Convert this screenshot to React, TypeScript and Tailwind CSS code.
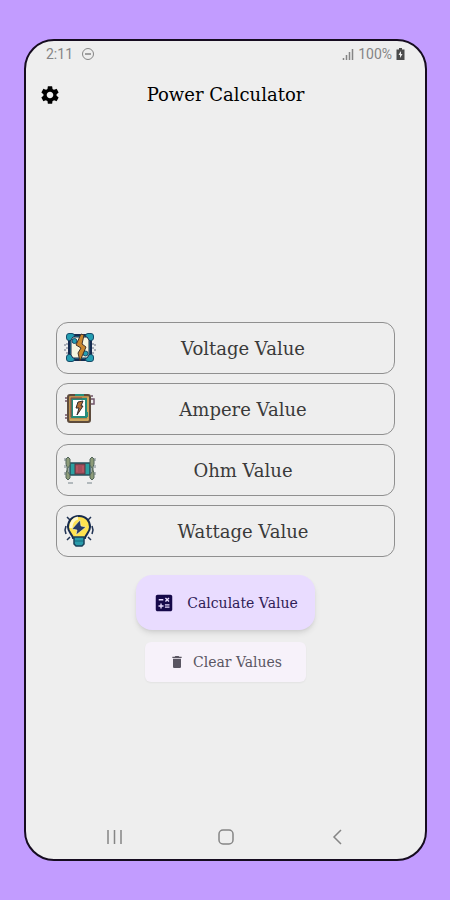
import React, { useState } from 'react';
import { MdCalculate, MdDelete, MdSettings } from 'react-icons/md';

const VoltageIcon = () => (
  <svg viewBox="0 0 32 32" className="size-8" role="img" aria-label="Voltage">
    <path d="M1 12v2M1 17v2M3 11v2M3 15v2M3 20v2M31 12v2M31 17v2M29 11v2M29 15v2M29 20v2" stroke="#687083" />
    <rect x="5" y="3" width="22" height="25" rx="2" fill="#248b9e" stroke="#152b50" strokeWidth="2" />
    <g fill="#249eb2" stroke="#174b69">
      <rect x="2.500" y="1.500" width="8" height="7" rx="2.500" />
      <rect x="21.500" y="1.500" width="8" height="7" rx="2.500" />
      <rect x="2.500" y="22.500" width="8" height="7" rx="2.500" />
      <rect x="21.500" y="22.500" width="8" height="7" rx="2.500" />
    </g>
    <path d="M9 5h14l2 3v15l-2 3H9l-2-3V8Z" fill="#f5f5df" stroke="#18274a" />
    <circle cx="10.500" cy="9" r="2.500" fill="#249eb2" stroke="#174b69" />
    <circle cx="21.500" cy="21.500" r="2.500" fill="#249eb2" stroke="#174b69" />
    <path d="m17 2-5 11 5 3-3 5 2 8 6-14-4-3 2-9Z" fill="#c9862c" stroke="#42342d" />
  </svg>
);

const AmpereIcon = () => (
  <svg viewBox="0 0 32 32" className="size-8" role="img" aria-label="Ampere">
    <path d="M1 5h3M1 8h3M1 22h3M1 25h3M27 3h2M27 6h3v5h-3" fill="none" stroke="#71566a" strokeWidth="1.500" />
    <rect x="4" y="2" width="22" height="27" rx="2" fill="#b98f4e" stroke="#5d4b3c" strokeWidth="2" />
    <path d="M6 27h18V4" fill="none" stroke="#e0bd72" />
    <rect x="8" y="6" width="14" height="18" fill="#fff" stroke="#268c7b" strokeWidth="2" />
    <path d="M7 24V5h11" fill="none" stroke="#8d443e" />
    <path d="M11 2h9M23 19v5" stroke="#29917d" strokeWidth="2" />
    <path d="m14 9-2 6h3l-2 7 6-9h-2l2-5Z" fill="#b56e35" stroke="#332b2b" />
  </svg>
);

const OhmIcon = () => (
  <svg viewBox="0 0 32 32" className="size-8" role="img" aria-label="Ohm">
    <path d="M1 4v3M1 11v3M1 18v3M31 4v3M31 11v3M31 18v3M4 29h5M23 29h5" stroke="#77838a" />
    <path d="M6 9h20v12H6Z" fill="#2ca0a1" stroke="#24505c" strokeWidth="1.500" />
    <rect x="11" y="10" width="10" height="10" fill="#a54d5b" stroke="#4f3942" />
    <path d="M13 12v6M19 12v6" stroke="#c5606a" />
    <g fill="#8d9b78" stroke="#53665b">
      <path d="m4 3 2 2v6l-2 3v4l2 3v3l-2 2-2-2v-5l1-3v-3l-1-3V5Z" />
      <path d="m28 3-2 2v6l2 3v4l-2 3v3l2 2 2-2v-5l-1-3v-3l1-3V5Z" />
    </g>
  </svg>
);

const WattageIcon = () => (
  <svg viewBox="0 0 32 32" className="size-8" role="img" aria-label="Wattage">
    <path d="m3 2 3 3M27 2l-3 3M2 11l-1 4 1 4M28 11l1 4-1 4M3 25l3-3M27 25l-3-3" fill="none" stroke="#223454" strokeWidth="1.500" />
    <path d="M15 1C8 1 4 6 4 12c0 5 4 7 5 11h12c1-4 5-6 5-11 0-6-4-11-11-11Z" fill="#ffe350" stroke="#172b4d" strokeWidth="2" />
    <path d="M7 13c0-5 2-9 7-10" fill="none" stroke="#fff9cf" strokeWidth="3" />
    <path d="m16 5-8 9 5 1-1 5 10-8-5-1Z" fill="#263b68" stroke="#fff6b8" strokeWidth=".6" />
    <path d="M10 22h10v7l-2 2h-6l-2-2Z" fill="#299baa" stroke="#194059" strokeWidth="1.500" />
    <path d="M11 26h8" stroke="#176c80" />
  </svg>
);

const fields = [
  { id: 'voltage', placeholder: 'Voltage Value', icon: VoltageIcon },
  { id: 'ampere', placeholder: 'Ampere Value', icon: AmpereIcon },
  { id: 'ohm', placeholder: 'Ohm Value', icon: OhmIcon },
  { id: 'wattage', placeholder: 'Wattage Value', icon: WattageIcon },
];

const StatusBar = () => (
  <div className="flex h-[26px] items-center justify-between px-5 font-['Roboto'] text-sm text-[#858585]">
    <div className="flex items-center gap-2">
      <span>2:11</span>
      <svg viewBox="0 0 14 14" className="size-3.5" fill="none" stroke="currentColor" aria-hidden="true">
        <circle cx="7" cy="7" r="5.500" />
        <path d="M4 7h6" strokeWidth="1.500" />
      </svg>
    </div>
    <div className="flex items-center gap-1">
      <svg viewBox="0 0 12 12" className="size-3" stroke="currentColor" aria-hidden="true">
        <path d="M1.500 10v2M4.500 7v5M7.500 4v8M10.500 1v11" strokeWidth="1.500" />
      </svg>
      <span>100%</span>
      <svg viewBox="0 0 9 12" className="h-3 w-[9px]" aria-hidden="true">
        <path d="M3 0h3v1.500h2.500V12h-8V1.500H3Z" fill="#4b4b4b" />
        <path d="M4.500 3.500 2.500 7H4v3l2.500-4H5V3.500Z" fill="#eee" />
      </svg>
    </div>
  </div>
);

const NavigationBar = () => (
  <nav className="flex h-11 items-center justify-between px-[78px] text-[#858585]">
    <button type="button" aria-label="Recent apps">
      <svg viewBox="0 0 20 20" className="size-5" stroke="currentColor" strokeWidth="1.500">
        <path d="M4 3v14M10.500 3v14M17 3v14" />
      </svg>
    </button>
    <button type="button" aria-label="Home">
      <svg viewBox="0 0 20 20" className="size-5" fill="none" stroke="currentColor" strokeWidth="1.500">
        <rect x="3" y="3" width="14" height="14" rx="4" />
      </svg>
    </button>
    <button type="button" aria-label="Back">
      <svg viewBox="0 0 20 20" className="size-5" fill="none" stroke="currentColor" strokeWidth="1.500">
        <path d="m14 3-7 7 7 7" />
      </svg>
    </button>
  </nav>
);

const App: React.FC = () => {
  const [values, setValues] = useState<Record<string, string>>({});

  // Needs two known values, the other two follow from Ohm's law
  const calculate = () => {
    let v = parseFloat(values.voltage);
    let a = parseFloat(values.ampere);
    const r = parseFloat(values.ohm);
    const w = parseFloat(values.wattage);

    if (isNaN(v)) {
      if (a && r) v = a * r;
      else if (a && w) v = w / a;
      else if (r && w) v = Math.sqrt(w * r);
    }
    if (isNaN(a)) a = r ? v / r : w / v;
    if (!isFinite(v) || !isFinite(a) || !a) return;

    setValues({
      voltage: String(v),
      ampere: String(a),
      ohm: String(v / a),
      wattage: String(v * a),
    });
  };

  return (
    <div className="flex min-h-screen flex-col bg-[#c29cff] pt-[39px] pr-[23px] pb-[39px] pl-6 font-['DejaVu_Serif',serif]">
      <div className="flex flex-1 flex-col rounded-[30px] border-2 border-[#160c20] bg-[#eeeeee]">
        <StatusBar />

        <header className="grid h-14 grid-cols-[40px_1fr_40px] items-center px-1">
          <button type="button" aria-label="Settings" className="flex justify-center text-black">
            <MdSettings size={22} />
          </button>
          <h1 className="text-center text-lg text-black">Power Calculator</h1>
        </header>

        <main className="flex flex-1 flex-col items-center justify-center px-[30px] pt-[66px]">
          <div className="flex w-full flex-col gap-[9px]">
            {fields.map(({ id, placeholder, icon: Icon }) => (
              <div key={id} className="flex h-[52px] items-center rounded-xl border border-[#8f8f8f] pr-1 pl-[7px]">
                <label htmlFor={id} className="shrink-0">
                  <Icon />
                </label>
                <input
                  id={id}
                  type="text"
                  inputMode="decimal"
                  placeholder={placeholder}
                  value={values[id] ?? ''}
                  onChange={(e) => setValues({ ...values, [id]: e.target.value })}
                  className="h-full min-w-0 flex-1 bg-transparent text-center text-lg text-[#333] outline-none placeholder:text-[#3a3a3a]"
                />
              </div>
            ))}
          </div>

          <button
            type="button"
            onClick={calculate}
            className="mt-[18px] flex h-[55px] items-center gap-3 rounded-2xl bg-[#e9dcff] px-[17px] text-sm text-[#2f2056] shadow-md"
          >
            <MdCalculate size={22} className="text-[#16094a]" />
            Calculate Value
          </button>
          <button
            type="button"
            onClick={() => setValues({})}
            className="mt-3 flex h-10 items-center gap-2 rounded-md bg-[#f7f2fa] px-6 text-sm text-[#5a5662] shadow-xs"
          >
            <MdDelete size={16} />
            Clear Values
          </button>
        </main>

        <NavigationBar />
      </div>
    </div>
  );
};

export default App;
